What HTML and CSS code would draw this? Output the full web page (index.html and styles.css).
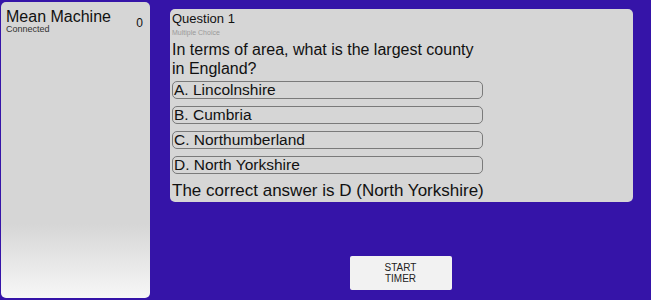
FILE: index.html
```html
<!DOCTYPE html>
<html lang="en">
<head>
    <meta charset="UTF-8">
    <title>Quiz</title>
    <link rel="stylesheet" href="styles.css">
</head>
<body>
    <div class="screen">
        <div class="team-panel">
            <div class="team">
                <div class="team-info">
                    <div class="team-name">Mean Machine</div>
                    <div class="team-status">Connected</div>
                </div>
                <div class="team-score">0</div>
            </div>
        </div>

        <div class="main">
            <div class="question-card">
                <div class="question-title">Question 1</div>
                <div class="question-type">Multiple Choice</div>
                <div class="question-text">In terms of area, what is the largest county in England?</div>
                <div class="option">A. Lincolnshire</div>
                <div class="option">B. Cumbria</div>
                <div class="option">C. Northumberland</div>
                <div class="option">D. North Yorkshire</div>
                <div class="answer">The correct answer is D (North Yorkshire)</div>
            </div>

            <div class="controls">
                <button class="btn">START<br>TIMER</button>
            </div>
        </div>
    </div>
</body>
</html>
```

FILE: styles.css
```css
html, body {
    margin: 0;
    height: 100%;
}
body {
    font-family: "Liberation Sans", Arial, sans-serif;
    background: #3514a8;
    color: #111;
    overflow: hidden;
}
.screen {
    display: flex;
    height: 300px;
    padding: 2px 0 2px 1px;
    box-sizing: border-box;
}
.team-panel {
    flex: 0 0 149px;
    background: linear-gradient(to bottom, #d6d6d6 0%, #d6d6d6 75%, #f7f7f7 100%);
    border-radius: 5px;
    box-sizing: border-box;
    padding: 7px 6px 0 5px;
}
.team {
    display: flex;
    justify-content: space-between;
}
.team-name {
    font-size: 16px;
    line-height: 16px;
}
.team-status {
    font-size: 9px;
    line-height: 8px;
    color: #333;
}
.team-score {
    font-size: 12px;
    padding-top: 7px;
    padding-right: 1px;
}
.main {
    flex: 1;
    min-width: 0;
    display: flex;
    flex-direction: column;
    padding: 7px 18px 0 20px;
}
.question-card {
    background: #d6d6d6;
    border-radius: 5px;
    padding: 2px 150px 4px 2px;
    height: 193px;
    box-sizing: border-box;
}
.question-title {
    font-size: 13px;
    line-height: 15px;
}
.question-type {
    font-size: 7px;
    line-height: 10px;
    color: #9a9a9a;
    margin-top: 2px;
    margin-bottom: 2px;
}
.question-text {
    font-size: 16px;
    line-height: 19px;
    margin-bottom: 3px;
}
.option {
    font-size: 15.5px;
    line-height: 16px;
    height: 18px;
    box-sizing: border-box;
    border: 1px solid #7a7a7a;
    border-radius: 5px;
    padding-left: 1px;
    margin-bottom: 7px;
}
.answer {
    font-size: 17px;
    line-height: 19px;
    white-space: nowrap;
}
.controls {
    flex: 1;
    display: flex;
    justify-content: center;
    padding-top: 54px;
    padding-right: 2px;
}
.btn {
    width: 102px;
    height: 34px;
    background: #f2f2f2;
    border: none;
    border-radius: 2px;
    font-family: "Liberation Sans", Arial, sans-serif;
    font-size: 10px;
    line-height: 11px;
    color: #222;
    padding: 0;
}
```
